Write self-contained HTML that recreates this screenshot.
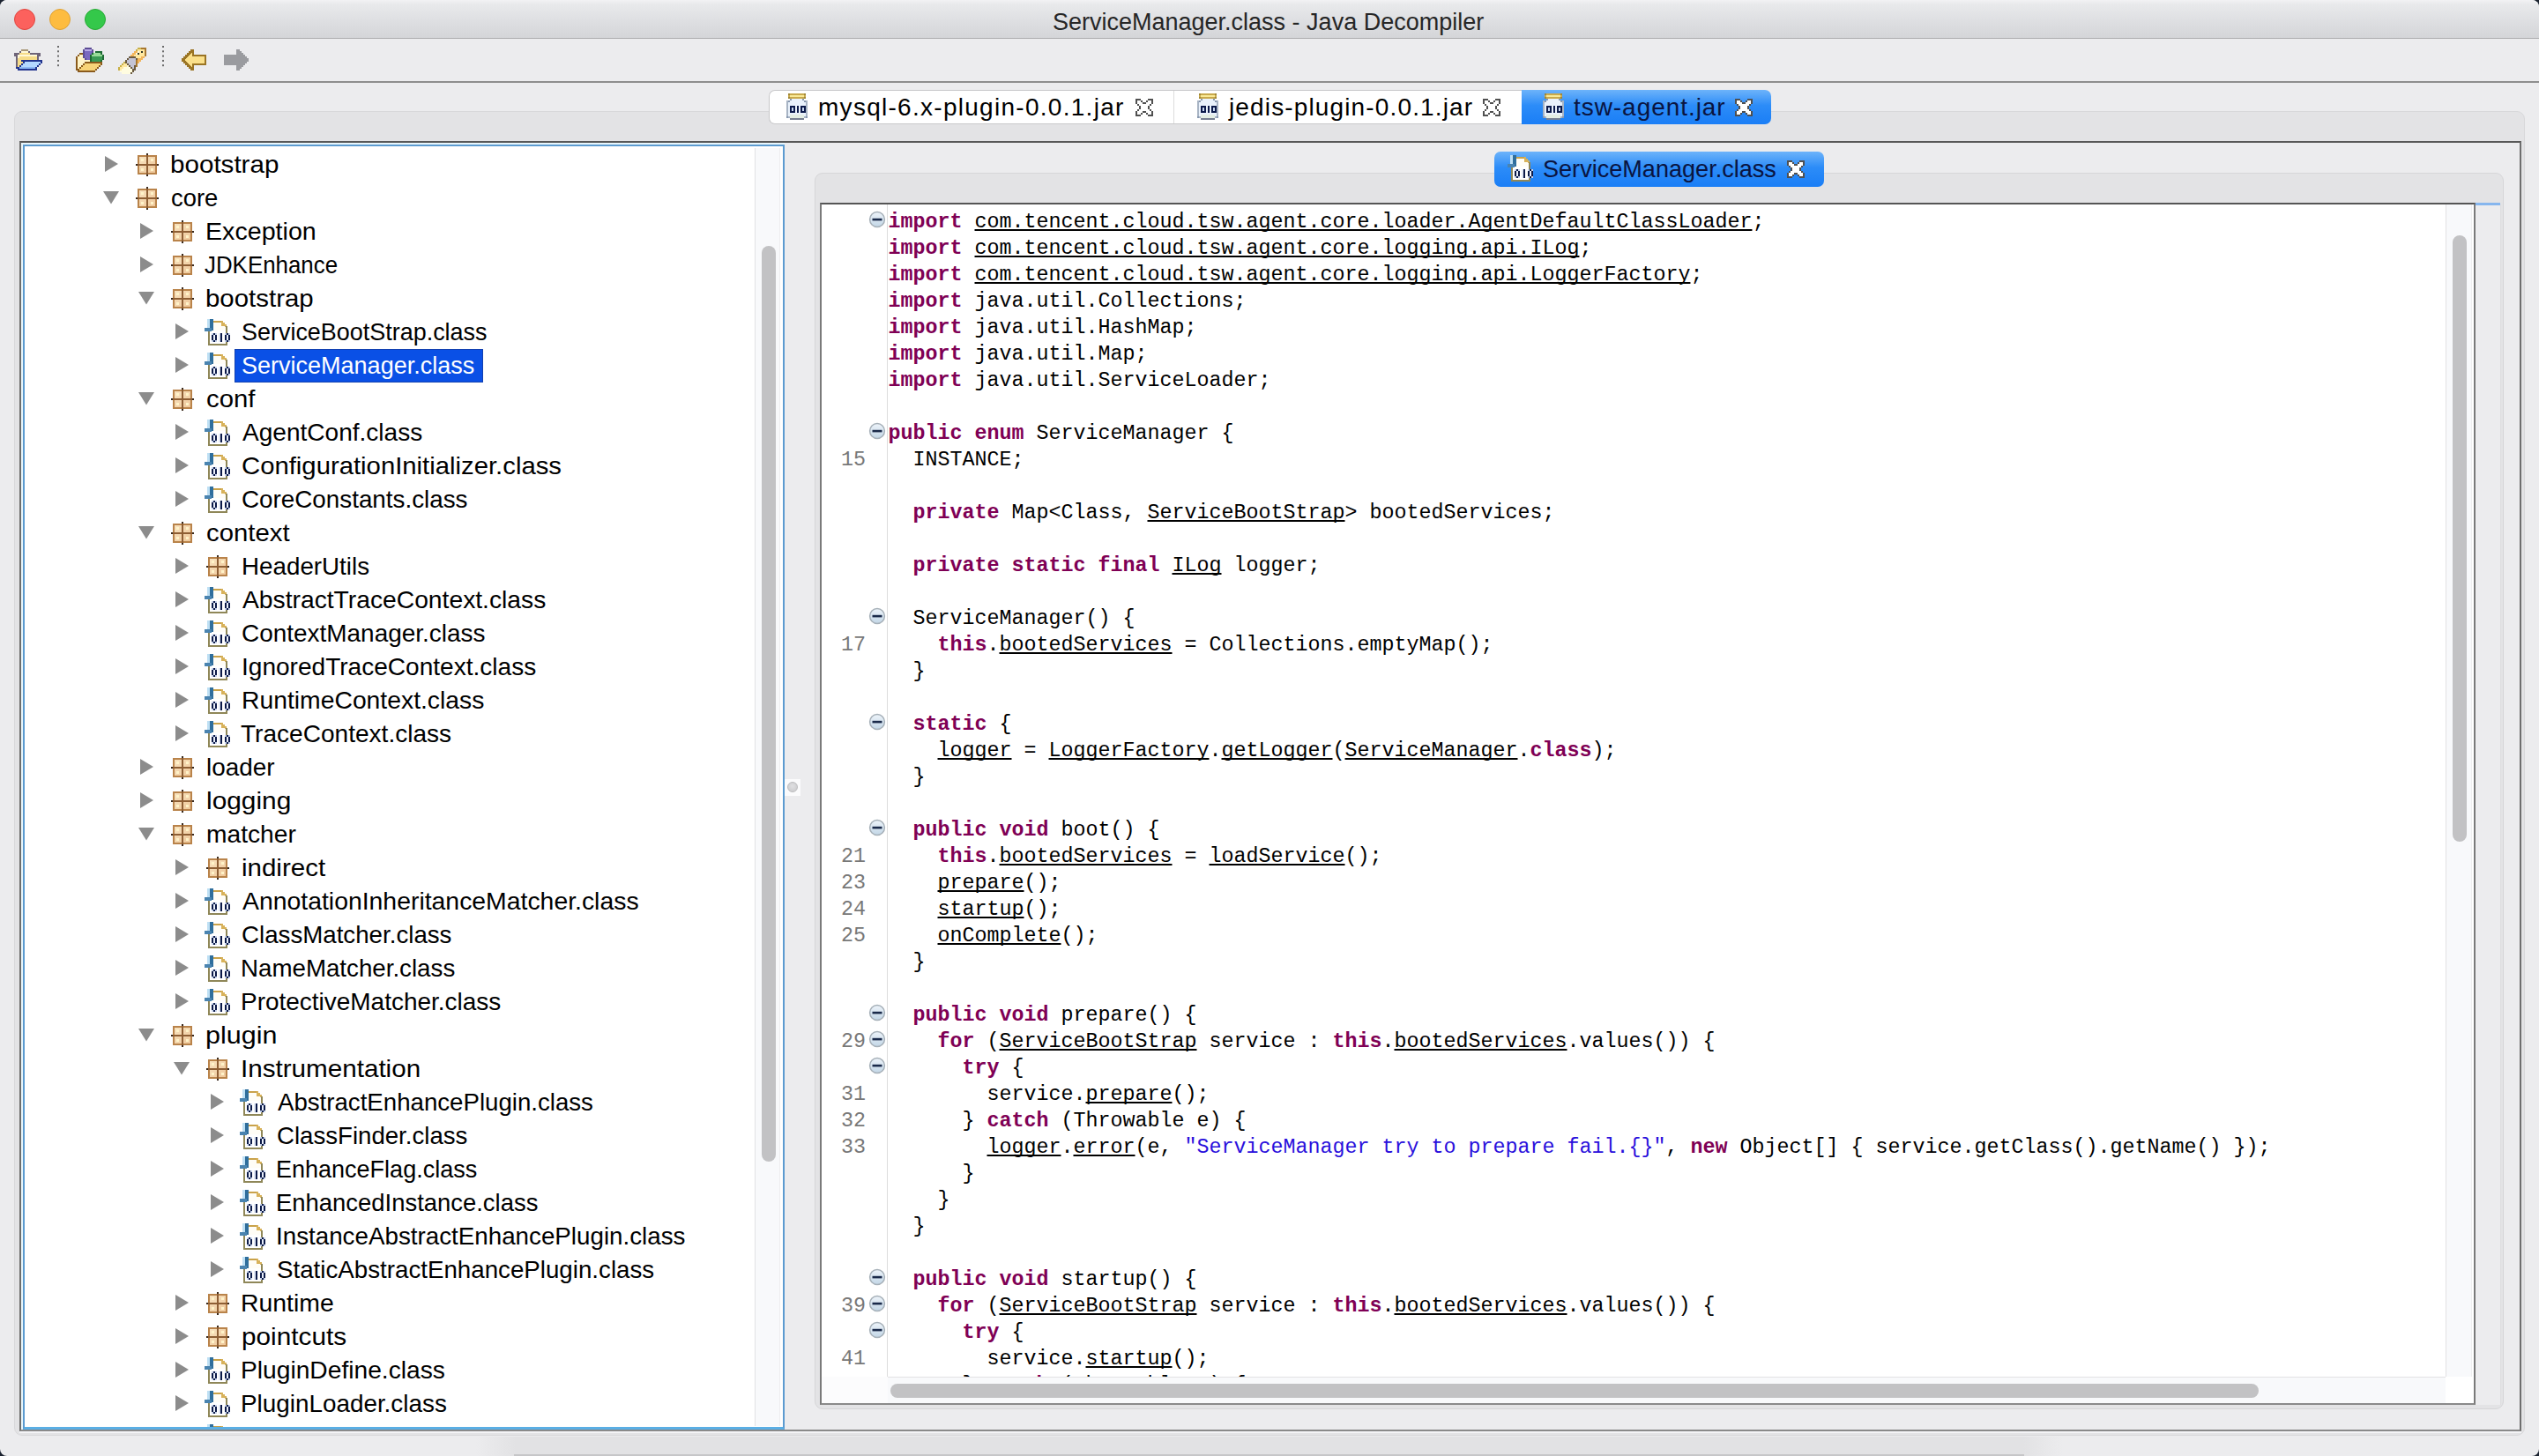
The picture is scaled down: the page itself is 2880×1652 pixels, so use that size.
<!DOCTYPE html>
<html><head><meta charset="utf-8"><style>
html,body{margin:0;padding:0;width:2880px;height:1652px;overflow:hidden;background:#1b2330}
.a{position:absolute;box-sizing:border-box}
#win{left:0;top:0;width:2880px;height:1652px;background:#ececee;border-radius:8px;overflow:hidden}
.ui{font-family:"Liberation Sans",sans-serif;white-space:pre}
.mono{font-family:"Liberation Mono",monospace;white-space:pre}
.code{font-size:23.333px;line-height:30px;color:#000}
.code b{color:#7f0055;font-weight:bold}
.code i{font-style:normal;color:#2a10dc}
.code u{text-decoration:underline;text-decoration-thickness:2px;text-underline-offset:2px;text-decoration-skip-ink:none}
.tl{font-size:28px;line-height:38px;color:#000}
svg{position:absolute;overflow:visible}
</style></head><body>
<div id="win" class="a">

<svg width="0" height="0" style="position:absolute"><defs>
<linearGradient id="gpk" x1="0" y1="0" x2="1" y2="1"><stop offset="0" stop-color="#f8e2bf"/><stop offset="1" stop-color="#eec79a"/></linearGradient>
<symbol id="pkg" viewBox="0 0 26 26" shape-rendering="crispEdges">
 <rect x="2" y="2" width="22" height="22" fill="#b9834a"/>
 <rect x="4" y="4" width="18" height="18" fill="url(#gpk)"/>
 <rect x="6" y="6" width="3" height="3" fill="#fff3c8"/><rect x="17" y="6" width="3" height="3" fill="#fff3c8"/>
 <rect x="6" y="17" width="3" height="3" fill="#fff3c8"/><rect x="17" y="17" width="3" height="3" fill="#fff3c8"/>
 <rect x="12" y="2" width="2" height="22" fill="#8e5e34"/>
 <rect x="2" y="12" width="22" height="2" fill="#8e5e34"/>
 <rect x="12" y="0" width="2" height="2" fill="#3a2a1c"/><rect x="12" y="24" width="2" height="2" fill="#3a2a1c"/>
 <rect x="0" y="12" width="2" height="2" fill="#3a2a1c"/><rect x="24" y="12" width="2" height="2" fill="#3a2a1c"/>
</symbol>
<symbol id="cls" viewBox="0 0 30 30" shape-rendering="crispEdges">
 <path d="M5 13 H24 V29 H5 Z" fill="#fff"/>
 <path d="M10 2 H19 L24 8 V13 H10 Z" fill="#fffdf6"/>
 <rect x="10" y="2" width="10" height="2" fill="#c9a24a"/>
 <path d="M19 2 h2 v2 h2 v2 h2 v3 h-2 v-1 h-4 z" fill="#d8b25a"/>
 <rect x="24" y="8" width="2" height="22" fill="#8f8758"/>
 <rect x="4" y="28" width="22" height="2" fill="#8f8758"/>
 <rect x="4" y="13" width="2" height="17" fill="#8f8758"/>
 <rect x="3" y="0" width="3" height="13" fill="#bfe0f4"/>
 <rect x="6" y="0" width="4" height="13" fill="#2f6e9c"/>
 <rect x="0" y="10" width="8" height="4" fill="#4a84b0"/>
 <rect x="8" y="16" width="6" height="10" fill="#c8d4ec"/><rect x="8" y="18" width="2" height="6" fill="#0c1a48"/><rect x="12" y="18" width="2" height="6" fill="#0c1a48"/><rect x="10" y="16" width="2" height="2" fill="#0c1a48"/><rect x="10" y="24" width="2" height="2" fill="#0c1a48"/><rect x="10" y="18" width="2" height="6" fill="#e8eefa"/>
 <rect x="18" y="16" width="2" height="10" fill="#0c1a48"/><rect x="16" y="16" width="2" height="10" fill="#dfe6f4"/>
 <rect x="23" y="16" width="6" height="10" fill="#c8d4ec"/><rect x="23" y="18" width="2" height="6" fill="#0c1a48"/><rect x="27" y="18" width="2" height="6" fill="#0c1a48"/><rect x="25" y="16" width="2" height="2" fill="#0c1a48"/><rect x="25" y="24" width="2" height="2" fill="#0c1a48"/><rect x="25" y="18" width="2" height="6" fill="#e8eefa"/>
</symbol>
<symbol id="cx" viewBox="0 0 20 20" shape-rendering="crispEdges"><rect x="0" y="0" width="6" height="2" fill="#505050"/><rect x="14" y="0" width="6" height="2" fill="#505050"/><rect x="0" y="2" width="2" height="2" fill="#505050"/><rect x="2" y="2" width="4" height="2" fill="#ffffff"/><rect x="6" y="2" width="2" height="2" fill="#505050"/><rect x="12" y="2" width="2" height="2" fill="#505050"/><rect x="14" y="2" width="4" height="2" fill="#ffffff"/><rect x="18" y="2" width="2" height="2" fill="#505050"/><rect x="0" y="4" width="2" height="2" fill="#505050"/><rect x="2" y="4" width="6" height="2" fill="#ffffff"/><rect x="8" y="4" width="4" height="2" fill="#505050"/><rect x="12" y="4" width="6" height="2" fill="#ffffff"/><rect x="18" y="4" width="2" height="2" fill="#505050"/><rect x="2" y="6" width="2" height="2" fill="#505050"/><rect x="4" y="6" width="12" height="2" fill="#ffffff"/><rect x="16" y="6" width="2" height="2" fill="#505050"/><rect x="4" y="8" width="2" height="2" fill="#505050"/><rect x="6" y="8" width="8" height="2" fill="#ffffff"/><rect x="14" y="8" width="2" height="2" fill="#505050"/><rect x="4" y="10" width="2" height="2" fill="#505050"/><rect x="6" y="10" width="8" height="2" fill="#ffffff"/><rect x="14" y="10" width="2" height="2" fill="#505050"/><rect x="2" y="12" width="2" height="2" fill="#505050"/><rect x="4" y="12" width="12" height="2" fill="#ffffff"/><rect x="16" y="12" width="2" height="2" fill="#505050"/><rect x="0" y="14" width="2" height="2" fill="#505050"/><rect x="2" y="14" width="6" height="2" fill="#ffffff"/><rect x="8" y="14" width="4" height="2" fill="#505050"/><rect x="12" y="14" width="6" height="2" fill="#ffffff"/><rect x="18" y="14" width="2" height="2" fill="#505050"/><rect x="0" y="16" width="2" height="2" fill="#505050"/><rect x="2" y="16" width="4" height="2" fill="#ffffff"/><rect x="6" y="16" width="2" height="2" fill="#505050"/><rect x="12" y="16" width="2" height="2" fill="#505050"/><rect x="14" y="16" width="4" height="2" fill="#ffffff"/><rect x="18" y="16" width="2" height="2" fill="#505050"/><rect x="0" y="18" width="6" height="2" fill="#505050"/><rect x="14" y="18" width="6" height="2" fill="#505050"/></symbol>
<symbol id="jar2" viewBox="0 0 24 30" shape-rendering="crispEdges"><rect x="2" y="0" width="2" height="2" fill="#a08838"/><rect x="4" y="0" width="16" height="2" fill="#c9a94c"/><rect x="20" y="0" width="2" height="2" fill="#a08838"/><rect x="2" y="2" width="2" height="2" fill="#c9a94c"/><rect x="4" y="2" width="16" height="2" fill="#f8e896"/><rect x="20" y="2" width="2" height="2" fill="#c9a94c"/><rect x="2" y="4" width="2" height="2" fill="#a08838"/><rect x="4" y="4" width="16" height="2" fill="#c9a94c"/><rect x="20" y="4" width="2" height="2" fill="#a08838"/><rect x="4" y="6" width="2" height="2" fill="#8898b0"/><rect x="6" y="6" width="12" height="2" fill="#eaf2fc"/><rect x="18" y="6" width="2" height="2" fill="#8898b0"/><rect x="0" y="8" width="2" height="2" fill="#a8b4c4"/><rect x="2" y="8" width="2" height="2" fill="#8898b0"/><rect x="4" y="8" width="16" height="2" fill="#eaf2fc"/><rect x="20" y="8" width="2" height="2" fill="#8898b0"/><rect x="22" y="8" width="2" height="2" fill="#a8b4c4"/><rect x="0" y="10" width="2" height="2" fill="#a8b4c4"/><rect x="2" y="10" width="20" height="2" fill="#eaf2fc"/><rect x="22" y="10" width="2" height="2" fill="#a8b4c4"/><rect x="0" y="12" width="2" height="2" fill="#a8b4c4"/><rect x="2" y="12" width="20" height="2" fill="#eaf2fc"/><rect x="22" y="12" width="2" height="2" fill="#a8b4c4"/><rect x="0" y="14" width="2" height="2" fill="#a8b4c4"/><rect x="2" y="14" width="2" height="2" fill="#eaf2fc"/><rect x="4" y="14" width="6" height="2" fill="#0c1a4a"/><rect x="10" y="14" width="2" height="2" fill="#eaf2fc"/><rect x="12" y="14" width="2" height="2" fill="#0c1a4a"/><rect x="14" y="14" width="2" height="2" fill="#eaf2fc"/><rect x="16" y="14" width="6" height="2" fill="#0c1a4a"/><rect x="22" y="14" width="2" height="2" fill="#a8b4c4"/><rect x="0" y="16" width="2" height="2" fill="#a8b4c4"/><rect x="2" y="16" width="2" height="2" fill="#eaf2fc"/><rect x="4" y="16" width="2" height="2" fill="#0c1a4a"/><rect x="6" y="16" width="2" height="2" fill="#c8d8f0"/><rect x="8" y="16" width="2" height="2" fill="#0c1a4a"/><rect x="10" y="16" width="2" height="2" fill="#eaf2fc"/><rect x="12" y="16" width="2" height="2" fill="#0c1a4a"/><rect x="14" y="16" width="2" height="2" fill="#eaf2fc"/><rect x="16" y="16" width="2" height="2" fill="#0c1a4a"/><rect x="18" y="16" width="2" height="2" fill="#c8d8f0"/><rect x="20" y="16" width="2" height="2" fill="#0c1a4a"/><rect x="22" y="16" width="2" height="2" fill="#a8b4c4"/><rect x="0" y="18" width="2" height="2" fill="#a8b4c4"/><rect x="2" y="18" width="2" height="2" fill="#eaf2fc"/><rect x="4" y="18" width="2" height="2" fill="#0c1a4a"/><rect x="6" y="18" width="2" height="2" fill="#c8d8f0"/><rect x="8" y="18" width="2" height="2" fill="#0c1a4a"/><rect x="10" y="18" width="2" height="2" fill="#eaf2fc"/><rect x="12" y="18" width="2" height="2" fill="#0c1a4a"/><rect x="14" y="18" width="2" height="2" fill="#eaf2fc"/><rect x="16" y="18" width="2" height="2" fill="#0c1a4a"/><rect x="18" y="18" width="2" height="2" fill="#c8d8f0"/><rect x="20" y="18" width="2" height="2" fill="#0c1a4a"/><rect x="22" y="18" width="2" height="2" fill="#a8b4c4"/><rect x="0" y="20" width="2" height="2" fill="#a8b4c4"/><rect x="2" y="20" width="2" height="2" fill="#eaf2fc"/><rect x="4" y="20" width="6" height="2" fill="#0c1a4a"/><rect x="10" y="20" width="2" height="2" fill="#eaf2fc"/><rect x="12" y="20" width="2" height="2" fill="#0c1a4a"/><rect x="14" y="20" width="2" height="2" fill="#eaf2fc"/><rect x="16" y="20" width="6" height="2" fill="#0c1a4a"/><rect x="22" y="20" width="2" height="2" fill="#a8b4c4"/><rect x="0" y="22" width="2" height="2" fill="#a8b4c4"/><rect x="2" y="22" width="20" height="2" fill="#eaf2fc"/><rect x="22" y="22" width="2" height="2" fill="#a8b4c4"/><rect x="0" y="24" width="2" height="2" fill="#a8b4c4"/><rect x="2" y="24" width="2" height="2" fill="#eaf2fc"/><rect x="4" y="24" width="16" height="2" fill="#e4eee4"/><rect x="20" y="24" width="2" height="2" fill="#eaf2fc"/><rect x="22" y="24" width="2" height="2" fill="#a8b4c4"/><rect x="0" y="26" width="2" height="2" fill="#8898b0"/><rect x="2" y="26" width="2" height="2" fill="#a8b4c4"/><rect x="4" y="26" width="16" height="2" fill="#e4eee4"/><rect x="20" y="26" width="2" height="2" fill="#a8b4c4"/><rect x="22" y="26" width="2" height="2" fill="#8898b0"/><rect x="4" y="28" width="16" height="2" fill="#788092"/></symbol>
<symbol id="jar" viewBox="0 0 26 32" shape-rendering="crispEdges">
 <rect x="2" y="1" width="20" height="6" fill="#b99a3a"/>
 <rect x="4" y="3" width="16" height="2" fill="#f6e28a"/>
 <rect x="3" y="8" width="18" height="24" fill="#9aa8b8"/>
 <rect x="0" y="10" width="24" height="20" fill="#aab4c2"/>
 <rect x="2" y="9" width="20" height="22" fill="#eef4fc"/>
 <rect x="4" y="14" width="6" height="8" fill="#0c1a48"/><rect x="6" y="16" width="2" height="4" fill="#eef4fc"/>
 <rect x="12" y="14" width="2" height="8" fill="#0c1a48"/>
 <rect x="16" y="14" width="6" height="8" fill="#0c1a48"/><rect x="18" y="16" width="2" height="4" fill="#eef4fc"/>
 <rect x="3" y="30" width="18" height="2" fill="#7a8496"/>
</symbol>
<linearGradient id="gfold" x1="0" y1="0" x2="0" y2="1"><stop offset="0" stop-color="#eef4fa"/><stop offset="1" stop-color="#c2d6e6"/></linearGradient>
<symbol id="fold" viewBox="0 0 20 20">
 <circle cx="10" cy="10" r="8.4" fill="url(#gfold)" stroke="#a6b0b8" stroke-width="1.5"/>
 <rect x="4.5" y="8.8" width="11" height="2.6" fill="#1a2a4a"/>
</symbol>
</defs></svg>

<div class="a" style="left:0;top:0;width:2880px;height:43px;background:linear-gradient(#f2f2f4,#e8e9eb 12%,#d4d5d8)"></div>
<div class="a" style="left:0;top:42.5px;width:2880px;height:1.5px;background:#acacae"></div>
<div class="a" style="left:15.8px;top:9.9px;width:24px;height:24px;border-radius:50%;background:#fc615d;border:1px solid #e0443e"></div>
<div class="a" style="left:55.7px;top:9.9px;width:24px;height:24px;border-radius:50%;background:#fdbc40;border:1px solid #dea236"></div>
<div class="a" style="left:95.8px;top:9.9px;width:24px;height:24px;border-radius:50%;background:#34c84a;border:1px solid #27aa35"></div>
<div class="a ui" style="left:1194px;top:6.5px;font-size:27px;line-height:36px;color:#262626">ServiceManager.class - Java Decompiler</div>
<div class="a" style="left:0;top:44px;width:2880px;height:48px;background:#ececee"></div>
<div class="a" style="left:0;top:92px;width:2880px;height:2px;background:#8e8e8e"></div>
<svg style="left:16px;top:56px" width="32" height="24" viewBox="0 0 32 24" shape-rendering="crispEdges"><rect x="8" y="0" width="8" height="2" fill="#a89878"/><rect x="6" y="2" width="2" height="2" fill="#6e6478"/><rect x="8" y="2" width="8" height="2" fill="#fff8d8"/><rect x="16" y="2" width="2" height="2" fill="#6e6478"/><rect x="0" y="4" width="6" height="2" fill="#6e6478"/><rect x="6" y="4" width="12" height="2" fill="#f6dc88"/><rect x="18" y="4" width="12" height="2" fill="#6e6478"/><rect x="0" y="6" width="4" height="2" fill="#6e6478"/><rect x="4" y="6" width="22" height="2" fill="#fff8d8"/><rect x="26" y="6" width="4" height="2" fill="#6e6478"/><rect x="2" y="8" width="2" height="2" fill="#6e6478"/><rect x="4" y="8" width="2" height="2" fill="#fff8d8"/><rect x="6" y="8" width="20" height="2" fill="#f6dc88"/><rect x="26" y="8" width="2" height="2" fill="#6e6478"/><rect x="2" y="10" width="2" height="2" fill="#6e6478"/><rect x="4" y="10" width="22" height="2" fill="#f6dc88"/><rect x="26" y="10" width="2" height="2" fill="#6e6478"/><rect x="2" y="12" width="2" height="2" fill="#6e6478"/><rect x="4" y="12" width="4" height="2" fill="#f6dc88"/><rect x="8" y="12" width="24" height="2" fill="#22348e"/><rect x="2" y="14" width="2" height="2" fill="#6e6478"/><rect x="4" y="14" width="6" height="2" fill="#f6dc88"/><rect x="10" y="14" width="2" height="2" fill="#22348e"/><rect x="12" y="14" width="18" height="2" fill="#b4d8ff"/><rect x="30" y="14" width="2" height="2" fill="#22348e"/><rect x="2" y="16" width="2" height="2" fill="#6e6478"/><rect x="4" y="16" width="4" height="2" fill="#f6dc88"/><rect x="8" y="16" width="2" height="2" fill="#22348e"/><rect x="10" y="16" width="18" height="2" fill="#b4d8ff"/><rect x="28" y="16" width="2" height="2" fill="#22348e"/><rect x="2" y="18" width="2" height="2" fill="#6e6478"/><rect x="4" y="18" width="2" height="2" fill="#f6dc88"/><rect x="6" y="18" width="2" height="2" fill="#22348e"/><rect x="8" y="18" width="18" height="2" fill="#b4d8ff"/><rect x="26" y="18" width="2" height="2" fill="#22348e"/><rect x="2" y="20" width="4" height="2" fill="#22348e"/><rect x="6" y="20" width="18" height="2" fill="#8cb8f4"/><rect x="24" y="20" width="2" height="2" fill="#22348e"/><rect x="4" y="22" width="22" height="2" fill="#22348e"/></svg>
<svg style="left:64px;top:50px" width="4" height="30" viewBox="0 0 4 30"><rect x="1" y="2.0" width="2" height="2" fill="#6a6a6a"/><rect x="1" y="7.3" width="2" height="2" fill="#6a6a6a"/><rect x="1" y="12.6" width="2" height="2" fill="#6a6a6a"/><rect x="1" y="17.9" width="2" height="2" fill="#6a6a6a"/><rect x="1" y="23.2" width="2" height="2" fill="#6a6a6a"/></svg>
<svg style="left:183px;top:50px" width="4" height="30" viewBox="0 0 4 30"><rect x="1" y="2.0" width="2" height="2" fill="#6a6a6a"/><rect x="1" y="7.3" width="2" height="2" fill="#6a6a6a"/><rect x="1" y="12.6" width="2" height="2" fill="#6a6a6a"/><rect x="1" y="17.9" width="2" height="2" fill="#6a6a6a"/><rect x="1" y="23.2" width="2" height="2" fill="#6a6a6a"/></svg>
<svg style="left:86px;top:54px" width="32" height="28" viewBox="0 0 32 28" shape-rendering="crispEdges"><rect x="10" y="0" width="8" height="2" fill="#5c4c94"/><rect x="8" y="2" width="2" height="2" fill="#5c4c94"/><rect x="10" y="2" width="8" height="2" fill="#b8a8e8"/><rect x="18" y="2" width="2" height="2" fill="#5c4c94"/><rect x="8" y="4" width="2" height="2" fill="#5c4c94"/><rect x="10" y="4" width="8" height="2" fill="#7a68c0"/><rect x="18" y="4" width="2" height="2" fill="#5c4c94"/><rect x="22" y="4" width="8" height="2" fill="#1e6a34"/><rect x="4" y="6" width="4" height="2" fill="#8a5a1c"/><rect x="8" y="6" width="2" height="2" fill="#5c4c94"/><rect x="10" y="6" width="8" height="2" fill="#7a68c0"/><rect x="18" y="6" width="2" height="2" fill="#1e6a34"/><rect x="20" y="6" width="8" height="2" fill="#98dc98"/><rect x="28" y="6" width="2" height="2" fill="#1e6a34"/><rect x="2" y="8" width="2" height="2" fill="#8a5a1c"/><rect x="4" y="8" width="4" height="2" fill="#fff4c8"/><rect x="8" y="8" width="2" height="2" fill="#5c4c94"/><rect x="10" y="8" width="6" height="2" fill="#7a68c0"/><rect x="16" y="8" width="2" height="2" fill="#1e6a34"/><rect x="18" y="8" width="12" height="2" fill="#98dc98"/><rect x="30" y="8" width="2" height="2" fill="#1e6a34"/><rect x="0" y="10" width="2" height="2" fill="#8a5a1c"/><rect x="2" y="10" width="6" height="2" fill="#fff4c8"/><rect x="8" y="10" width="2" height="2" fill="#5c4c94"/><rect x="10" y="10" width="6" height="2" fill="#7a68c0"/><rect x="16" y="10" width="2" height="2" fill="#1e6a34"/><rect x="18" y="10" width="12" height="2" fill="#3a9a54"/><rect x="30" y="10" width="2" height="2" fill="#1e6a34"/><rect x="0" y="12" width="2" height="2" fill="#8a5a1c"/><rect x="2" y="12" width="8" height="2" fill="#fff4c8"/><rect x="10" y="12" width="2" height="2" fill="#5c4c94"/><rect x="12" y="12" width="4" height="2" fill="#7a68c0"/><rect x="16" y="12" width="2" height="2" fill="#1e6a34"/><rect x="18" y="12" width="12" height="2" fill="#3a9a54"/><rect x="30" y="12" width="2" height="2" fill="#1e6a34"/><rect x="0" y="14" width="2" height="2" fill="#8a5a1c"/><rect x="2" y="14" width="14" height="2" fill="#fff4c8"/><rect x="16" y="14" width="2" height="2" fill="#1e6a34"/><rect x="18" y="14" width="10" height="2" fill="#3a9a54"/><rect x="28" y="14" width="2" height="2" fill="#1e6a34"/><rect x="0" y="16" width="2" height="2" fill="#8a5a1c"/><rect x="2" y="16" width="8" height="2" fill="#fff4c8"/><rect x="10" y="16" width="20" height="2" fill="#8a5a1c"/><rect x="0" y="18" width="2" height="2" fill="#8a5a1c"/><rect x="2" y="18" width="6" height="2" fill="#fff4c8"/><rect x="8" y="18" width="2" height="2" fill="#8a5a1c"/><rect x="10" y="18" width="18" height="2" fill="#f8d478"/><rect x="28" y="18" width="2" height="2" fill="#8a5a1c"/><rect x="0" y="20" width="2" height="2" fill="#8a5a1c"/><rect x="2" y="20" width="4" height="2" fill="#fff4c8"/><rect x="6" y="20" width="2" height="2" fill="#8a5a1c"/><rect x="8" y="20" width="18" height="2" fill="#f8d478"/><rect x="26" y="20" width="2" height="2" fill="#8a5a1c"/><rect x="0" y="22" width="2" height="2" fill="#8a5a1c"/><rect x="2" y="22" width="2" height="2" fill="#fff4c8"/><rect x="4" y="22" width="2" height="2" fill="#8a5a1c"/><rect x="6" y="22" width="18" height="2" fill="#f8d478"/><rect x="24" y="22" width="2" height="2" fill="#8a5a1c"/><rect x="0" y="24" width="4" height="2" fill="#8a5a1c"/><rect x="4" y="24" width="18" height="2" fill="#f8d478"/><rect x="22" y="24" width="2" height="2" fill="#8a5a1c"/><rect x="2" y="26" width="20" height="2" fill="#8a5a1c"/></svg>
<svg style="left:134px;top:54px" width="32" height="30" viewBox="0 0 32 30" shape-rendering="crispEdges"><rect x="22" y="0" width="4" height="2" fill="#c8b048"/><rect x="26" y="0" width="6" height="2" fill="#a87830"/><rect x="20" y="2" width="2" height="2" fill="#c8b048"/><rect x="22" y="2" width="8" height="2" fill="#ffe8a0"/><rect x="30" y="2" width="2" height="2" fill="#a87830"/><rect x="18" y="4" width="4" height="2" fill="#f2b45a"/><rect x="22" y="4" width="2" height="2" fill="#fffce0"/><rect x="24" y="4" width="2" height="2" fill="#ffe8a0"/><rect x="26" y="4" width="2" height="2" fill="#303828"/><rect x="28" y="4" width="2" height="2" fill="#ffe8a0"/><rect x="30" y="4" width="2" height="2" fill="#a87830"/><rect x="16" y="6" width="4" height="2" fill="#f2b45a"/><rect x="20" y="6" width="2" height="2" fill="#fffce0"/><rect x="22" y="6" width="2" height="2" fill="#303828"/><rect x="24" y="6" width="6" height="2" fill="#ffe8a0"/><rect x="30" y="6" width="2" height="2" fill="#a87830"/><rect x="14" y="8" width="4" height="2" fill="#f2b45a"/><rect x="18" y="8" width="12" height="2" fill="#ffe8a0"/><rect x="30" y="8" width="2" height="2" fill="#a87830"/><rect x="12" y="10" width="8" height="2" fill="#6a5a40"/><rect x="20" y="10" width="6" height="2" fill="#ffe8a0"/><rect x="26" y="10" width="4" height="2" fill="#f2b45a"/><rect x="10" y="12" width="2" height="2" fill="#6a5a40"/><rect x="12" y="12" width="8" height="2" fill="#c4c4d4"/><rect x="20" y="12" width="2" height="2" fill="#6a5a40"/><rect x="22" y="12" width="6" height="2" fill="#f2b45a"/><rect x="8" y="14" width="2" height="2" fill="#6a5a40"/><rect x="10" y="14" width="10" height="2" fill="#c4c4d4"/><rect x="20" y="14" width="2" height="2" fill="#a87830"/><rect x="22" y="14" width="4" height="2" fill="#f2b45a"/><rect x="6" y="16" width="2" height="2" fill="#c8b048"/><rect x="8" y="16" width="2" height="2" fill="#6a5a40"/><rect x="10" y="16" width="10" height="2" fill="#c4c4d4"/><rect x="20" y="16" width="2" height="2" fill="#a87830"/><rect x="22" y="16" width="2" height="2" fill="#f2b45a"/><rect x="4" y="18" width="2" height="2" fill="#c8b048"/><rect x="6" y="18" width="4" height="2" fill="#ffe8a0"/><rect x="10" y="18" width="2" height="2" fill="#6a5a40"/><rect x="12" y="18" width="8" height="2" fill="#c4c4d4"/><rect x="20" y="18" width="2" height="2" fill="#a87830"/><rect x="2" y="20" width="2" height="2" fill="#c8b048"/><rect x="4" y="20" width="6" height="2" fill="#ffe8a0"/><rect x="10" y="20" width="2" height="2" fill="#fffce0"/><rect x="12" y="20" width="2" height="2" fill="#6a5a40"/><rect x="14" y="20" width="4" height="2" fill="#c4c4d4"/><rect x="18" y="20" width="2" height="2" fill="#6a5a40"/><rect x="20" y="20" width="2" height="2" fill="#a87830"/><rect x="0" y="22" width="2" height="2" fill="#c8b048"/><rect x="2" y="22" width="4" height="2" fill="#ffe8a0"/><rect x="6" y="22" width="8" height="2" fill="#fffce0"/><rect x="14" y="22" width="2" height="2" fill="#6a5a40"/><rect x="16" y="22" width="2" height="2" fill="#c4c4d4"/><rect x="18" y="22" width="2" height="2" fill="#6a5a40"/><rect x="0" y="24" width="2" height="2" fill="#c8b048"/><rect x="2" y="24" width="2" height="2" fill="#ffe8a0"/><rect x="4" y="24" width="12" height="2" fill="#fffce0"/><rect x="16" y="24" width="4" height="2" fill="#6a5a40"/><rect x="2" y="26" width="14" height="2" fill="#fffce0"/><rect x="16" y="26" width="2" height="2" fill="#6a5a40"/><rect x="4" y="28" width="10" height="2" fill="#fffce0"/><rect x="14" y="28" width="2" height="2" fill="#6a5a40"/></svg>
<svg style="left:206px;top:56px" width="28" height="24" viewBox="0 0 28 24" shape-rendering="crispEdges">
 <path d="M0 10 h2 v-2 h2 v-2 h2 v-2 h2 v-2 h2 v-2 h4 v6 h14 v12 h-14 v6 h-4 v-2 h-2 v-2 h-2 v-2 h-2 v-2 h-2 v-2 h-2 z" fill="#9a7424"/>
 <path d="M3 12 L12 3 V8 H26 V16 H12 V21 Z" fill="#fbe08a"/>
</svg>
<svg style="left:254px;top:56px" width="28" height="24" viewBox="0 0 28 24" shape-rendering="crispEdges">
 <path d="M28 10 h-2 v-2 h-2 v-2 h-2 v-2 h-2 v-2 h-2 v-2 h-4 v6 h-14 v12 h14 v6 h4 v-2 h2 v-2 h2 v-2 h2 v-2 h2 v-2 h2 z" fill="#9a9b9f"/>
</svg>
<div class="a" style="left:16px;top:126px;width:2848px;height:1503px;background:#e3e3e5;border:1px solid #d8d8da;border-radius:9px"></div>
<div class="a" style="left:872px;top:102px;width:854px;height:39px;background:#fff;border:1px solid #c8c8ca;border-right:none;border-radius:7px 0 0 7px"></div>
<div class="a" style="left:1331px;top:103px;width:1px;height:37px;background:#dcdcdc"></div>
<div class="a" style="left:1726px;top:102px;width:283px;height:39px;background:linear-gradient(#6db3fa,#2c8cf8 45%,#1a7ef6);border-radius:0 7px 7px 0"></div>
<svg style="left:892px;top:106px" width="24" height="30" viewBox="0 0 24 30"><use href="#jar2"/></svg>
<svg style="left:1358px;top:106px" width="24" height="30" viewBox="0 0 24 30"><use href="#jar2"/></svg>
<svg style="left:1750px;top:106px" width="24" height="30" viewBox="0 0 24 30"><use href="#jar2"/></svg>
<div class="a ui" style="left:928px;top:103px;font-size:28px;line-height:38px;letter-spacing:1.28px;color:#000">mysql-6.x-plugin-0.0.1.jar</div>
<div class="a ui" style="left:1394px;top:103px;font-size:28px;line-height:38px;letter-spacing:1.14px;color:#000">jedis-plugin-0.0.1.jar</div>
<div class="a ui" style="left:1785px;top:103px;font-size:28px;line-height:38px;letter-spacing:0.95px;color:#0a1440">tsw-agent.jar</div>
<svg style="left:1288px;top:112px" width="20" height="20" viewBox="0 0 20 20"><use href="#cx"/></svg>
<svg style="left:1682px;top:112px" width="20" height="20" viewBox="0 0 20 20"><use href="#cx"/></svg>
<svg style="left:1968px;top:112px" width="20" height="20" viewBox="0 0 20 20"><use href="#cx"/></svg>
<div class="a" style="left:22px;top:160px;width:2838px;height:1464px;background:#ececee;border:2px solid #6e6e6e;border-top-color:#585858;border-bottom-color:#8a8a8a"></div>
<div class="a" style="left:22px;top:1624px;width:2838px;height:2px;background:#f4f4f6"></div>
<div class="a" style="left:540px;top:1630px;width:1800px;height:22px;background:linear-gradient(90deg,rgba(226,226,228,0),#e2e2e4 45px,#e2e2e4 1755px,rgba(226,226,228,0))"></div>
<div class="a" style="left:583px;top:1650px;width:1713px;height:2px;background:#c6c6c8"></div>
<div class="a" style="left:24px;top:162px;width:866px;height:1460px;background:#e8f6fc"></div>
<div class="a" style="left:26px;top:164px;width:864px;height:1458px;border:2px solid #5c9bd0;border-bottom:3.5px solid #5aaee4;background:#fff"></div>
<div class="a" style="left:27px;top:166px;width:861px;height:1453px;overflow:hidden">
<svg style="left:92px;top:11px" width="16" height="18" viewBox="0 0 16 18"><path d="M0 0 L15 9 L0 18Z" fill="#8c8c8c"/></svg>
<svg style="left:127px;top:8px" width="26" height="26" viewBox="0 0 26 26"><use href="#pkg"/></svg>
<div class="a ui tl" style="left:166.29px;top:2px;color:#000;transform:scaleX(1.0570);transform-origin:0 0">bootstrap</div>
<svg style="left:90px;top:51px" width="18" height="15" viewBox="0 0 18 15"><path d="M0 0 H18 L9 14.5Z" fill="#8c8c8c"/></svg>
<svg style="left:127px;top:46px" width="26" height="26" viewBox="0 0 26 26"><use href="#pkg"/></svg>
<div class="a ui tl" style="left:167.42px;top:40px;color:#000;transform:scaleX(0.9792);transform-origin:0 0">core</div>
<svg style="left:132px;top:87px" width="16" height="18" viewBox="0 0 16 18"><path d="M0 0 L15 9 L0 18Z" fill="#8c8c8c"/></svg>
<svg style="left:167px;top:84px" width="26" height="26" viewBox="0 0 26 26"><use href="#pkg"/></svg>
<div class="a ui tl" style="left:206.05px;top:78px;color:#000;transform:scaleX(1.0227);transform-origin:0 0">Exception</div>
<svg style="left:132px;top:125px" width="16" height="18" viewBox="0 0 16 18"><path d="M0 0 L15 9 L0 18Z" fill="#8c8c8c"/></svg>
<svg style="left:167px;top:122px" width="26" height="26" viewBox="0 0 26 26"><use href="#pkg"/></svg>
<div class="a ui tl" style="left:204.60px;top:116px;color:#000;transform:scaleX(0.9241);transform-origin:0 0">JDKEnhance</div>
<svg style="left:130px;top:165px" width="18" height="15" viewBox="0 0 18 15"><path d="M0 0 H18 L9 14.5Z" fill="#8c8c8c"/></svg>
<svg style="left:167px;top:160px" width="26" height="26" viewBox="0 0 26 26"><use href="#pkg"/></svg>
<div class="a ui tl" style="left:206.40px;top:154px;color:#000;transform:scaleX(1.0509);transform-origin:0 0">bootstrap</div>
<svg style="left:172px;top:201px" width="16" height="18" viewBox="0 0 16 18"><path d="M0 0 L15 9 L0 18Z" fill="#8c8c8c"/></svg>
<svg style="left:205px;top:196px" width="30" height="30" viewBox="0 0 30 30"><use href="#cls"/></svg>
<div class="a ui tl" style="left:246.74px;top:192px;color:#000;transform:scaleX(0.9622);transform-origin:0 0">ServiceBootStrap.class</div>
<svg style="left:172px;top:239px" width="16" height="18" viewBox="0 0 16 18"><path d="M0 0 L15 9 L0 18Z" fill="#8c8c8c"/></svg>
<svg style="left:205px;top:234px" width="30" height="30" viewBox="0 0 30 30"><use href="#cls"/></svg>
<div class="a" style="left:239px;top:230px;width:282px;height:38px;background:#0a50e6;box-shadow:inset 0 0 0 1px #1240b0"></div>
<div class="a ui tl" style="left:246.84px;top:230px;color:#fff;transform:scaleX(0.9647);transform-origin:0 0">ServiceManager.class</div>
<svg style="left:130px;top:279px" width="18" height="15" viewBox="0 0 18 15"><path d="M0 0 H18 L9 14.5Z" fill="#8c8c8c"/></svg>
<svg style="left:167px;top:274px" width="26" height="26" viewBox="0 0 26 26"><use href="#pkg"/></svg>
<div class="a ui tl" style="left:207.35px;top:268px;color:#000;transform:scaleX(1.0481);transform-origin:0 0">conf</div>
<svg style="left:172px;top:315px" width="16" height="18" viewBox="0 0 16 18"><path d="M0 0 L15 9 L0 18Z" fill="#8c8c8c"/></svg>
<svg style="left:205px;top:310px" width="30" height="30" viewBox="0 0 30 30"><use href="#cls"/></svg>
<div class="a ui tl" style="left:247.70px;top:306px;color:#000;transform:scaleX(1.0015);transform-origin:0 0">AgentConf.class</div>
<svg style="left:172px;top:353px" width="16" height="18" viewBox="0 0 16 18"><path d="M0 0 L15 9 L0 18Z" fill="#8c8c8c"/></svg>
<svg style="left:205px;top:348px" width="30" height="30" viewBox="0 0 30 30"><use href="#cls"/></svg>
<div class="a ui tl" style="left:246.65px;top:344px;color:#000;transform:scaleX(1.0458);transform-origin:0 0">ConfigurationInitializer.class</div>
<svg style="left:172px;top:391px" width="16" height="18" viewBox="0 0 16 18"><path d="M0 0 L15 9 L0 18Z" fill="#8c8c8c"/></svg>
<svg style="left:205px;top:386px" width="30" height="30" viewBox="0 0 30 30"><use href="#cls"/></svg>
<div class="a ui tl" style="left:247.21px;top:382px;color:#000;transform:scaleX(0.9930);transform-origin:0 0">CoreConstants.class</div>
<svg style="left:130px;top:431px" width="18" height="15" viewBox="0 0 18 15"><path d="M0 0 H18 L9 14.5Z" fill="#8c8c8c"/></svg>
<svg style="left:167px;top:426px" width="26" height="26" viewBox="0 0 26 26"><use href="#pkg"/></svg>
<div class="a ui tl" style="left:207.45px;top:420px;color:#000;transform:scaleX(1.0483);transform-origin:0 0">context</div>
<svg style="left:172px;top:467px" width="16" height="18" viewBox="0 0 16 18"><path d="M0 0 L15 9 L0 18Z" fill="#8c8c8c"/></svg>
<svg style="left:207px;top:464px" width="26" height="26" viewBox="0 0 26 26"><use href="#pkg"/></svg>
<div class="a ui tl" style="left:246.62px;top:458px;color:#000;transform:scaleX(0.9916);transform-origin:0 0">HeaderUtils</div>
<svg style="left:172px;top:505px" width="16" height="18" viewBox="0 0 16 18"><path d="M0 0 L15 9 L0 18Z" fill="#8c8c8c"/></svg>
<svg style="left:205px;top:500px" width="30" height="30" viewBox="0 0 30 30"><use href="#cls"/></svg>
<div class="a ui tl" style="left:247.60px;top:496px;color:#000;transform:scaleX(1.0088);transform-origin:0 0">AbstractTraceContext.class</div>
<svg style="left:172px;top:543px" width="16" height="18" viewBox="0 0 16 18"><path d="M0 0 L15 9 L0 18Z" fill="#8c8c8c"/></svg>
<svg style="left:205px;top:538px" width="30" height="30" viewBox="0 0 30 30"><use href="#cls"/></svg>
<div class="a ui tl" style="left:247.20px;top:534px;color:#000;transform:scaleX(0.9978);transform-origin:0 0">ContextManager.class</div>
<svg style="left:172px;top:581px" width="16" height="18" viewBox="0 0 16 18"><path d="M0 0 L15 9 L0 18Z" fill="#8c8c8c"/></svg>
<svg style="left:205px;top:576px" width="30" height="30" viewBox="0 0 30 30"><use href="#cls"/></svg>
<div class="a ui tl" style="left:246.60px;top:572px;color:#000;transform:scaleX(1.0021);transform-origin:0 0">IgnoredTraceContext.class</div>
<svg style="left:172px;top:619px" width="16" height="18" viewBox="0 0 16 18"><path d="M0 0 L15 9 L0 18Z" fill="#8c8c8c"/></svg>
<svg style="left:205px;top:614px" width="30" height="30" viewBox="0 0 30 30"><use href="#cls"/></svg>
<div class="a ui tl" style="left:246.58px;top:610px;color:#000;transform:scaleX(1.0112);transform-origin:0 0">RuntimeContext.class</div>
<svg style="left:172px;top:657px" width="16" height="18" viewBox="0 0 16 18"><path d="M0 0 L15 9 L0 18Z" fill="#8c8c8c"/></svg>
<svg style="left:205px;top:652px" width="30" height="30" viewBox="0 0 30 30"><use href="#cls"/></svg>
<div class="a ui tl" style="left:246.00px;top:648px;color:#000;transform:scaleX(1.0021);transform-origin:0 0">TraceContext.class</div>
<svg style="left:132px;top:695px" width="16" height="18" viewBox="0 0 16 18"><path d="M0 0 L15 9 L0 18Z" fill="#8c8c8c"/></svg>
<svg style="left:167px;top:692px" width="26" height="26" viewBox="0 0 26 26"><use href="#pkg"/></svg>
<div class="a ui tl" style="left:207.11px;top:686px;color:#000;transform:scaleX(0.9947);transform-origin:0 0">loader</div>
<svg style="left:132px;top:733px" width="16" height="18" viewBox="0 0 16 18"><path d="M0 0 L15 9 L0 18Z" fill="#8c8c8c"/></svg>
<svg style="left:167px;top:730px" width="26" height="26" viewBox="0 0 26 26"><use href="#pkg"/></svg>
<div class="a ui tl" style="left:206.97px;top:724px;color:#000;transform:scaleX(1.0655);transform-origin:0 0">logging</div>
<svg style="left:130px;top:773px" width="18" height="15" viewBox="0 0 18 15"><path d="M0 0 H18 L9 14.5Z" fill="#8c8c8c"/></svg>
<svg style="left:167px;top:768px" width="26" height="26" viewBox="0 0 26 26"><use href="#pkg"/></svg>
<div class="a ui tl" style="left:207.09px;top:762px;color:#000;transform:scaleX(1.0071);transform-origin:0 0">matcher</div>
<svg style="left:172px;top:809px" width="16" height="18" viewBox="0 0 16 18"><path d="M0 0 L15 9 L0 18Z" fill="#8c8c8c"/></svg>
<svg style="left:207px;top:806px" width="26" height="26" viewBox="0 0 26 26"><use href="#pkg"/></svg>
<div class="a ui tl" style="left:246.89px;top:800px;color:#000;transform:scaleX(1.0534);transform-origin:0 0">indirect</div>
<svg style="left:172px;top:847px" width="16" height="18" viewBox="0 0 16 18"><path d="M0 0 L15 9 L0 18Z" fill="#8c8c8c"/></svg>
<svg style="left:205px;top:842px" width="30" height="30" viewBox="0 0 30 30"><use href="#cls"/></svg>
<div class="a ui tl" style="left:247.80px;top:838px;color:#000;transform:scaleX(1.0135);transform-origin:0 0">AnnotationInheritanceMatcher.class</div>
<svg style="left:172px;top:885px" width="16" height="18" viewBox="0 0 16 18"><path d="M0 0 L15 9 L0 18Z" fill="#8c8c8c"/></svg>
<svg style="left:205px;top:880px" width="30" height="30" viewBox="0 0 30 30"><use href="#cls"/></svg>
<div class="a ui tl" style="left:247.21px;top:876px;color:#000;transform:scaleX(0.9887);transform-origin:0 0">ClassMatcher.class</div>
<svg style="left:172px;top:923px" width="16" height="18" viewBox="0 0 16 18"><path d="M0 0 L15 9 L0 18Z" fill="#8c8c8c"/></svg>
<svg style="left:205px;top:918px" width="30" height="30" viewBox="0 0 30 30"><use href="#cls"/></svg>
<div class="a ui tl" style="left:246.22px;top:914px;color:#000;transform:scaleX(0.9893);transform-origin:0 0">NameMatcher.class</div>
<svg style="left:172px;top:961px" width="16" height="18" viewBox="0 0 16 18"><path d="M0 0 L15 9 L0 18Z" fill="#8c8c8c"/></svg>
<svg style="left:205px;top:956px" width="30" height="30" viewBox="0 0 30 30"><use href="#cls"/></svg>
<div class="a ui tl" style="left:246.20px;top:952px;color:#000;transform:scaleX(0.9986);transform-origin:0 0">ProtectiveMatcher.class</div>
<svg style="left:130px;top:1001px" width="18" height="15" viewBox="0 0 18 15"><path d="M0 0 H18 L9 14.5Z" fill="#8c8c8c"/></svg>
<svg style="left:167px;top:996px" width="26" height="26" viewBox="0 0 26 26"><use href="#pkg"/></svg>
<div class="a ui tl" style="left:206.22px;top:990px;color:#000;transform:scaleX(1.0887);transform-origin:0 0">plugin</div>
<svg style="left:170px;top:1039px" width="18" height="15" viewBox="0 0 18 15"><path d="M0 0 H18 L9 14.5Z" fill="#8c8c8c"/></svg>
<svg style="left:207px;top:1034px" width="26" height="26" viewBox="0 0 26 26"><use href="#pkg"/></svg>
<div class="a ui tl" style="left:245.68px;top:1028px;color:#000;transform:scaleX(1.0577);transform-origin:0 0">Instrumentation</div>
<svg style="left:212px;top:1075px" width="16" height="18" viewBox="0 0 16 18"><path d="M0 0 L15 9 L0 18Z" fill="#8c8c8c"/></svg>
<svg style="left:245px;top:1070px" width="30" height="30" viewBox="0 0 30 30"><use href="#cls"/></svg>
<div class="a ui tl" style="left:287.50px;top:1066px;color:#000;transform:scaleX(0.9870);transform-origin:0 0">AbstractEnhancePlugin.class</div>
<svg style="left:212px;top:1113px" width="16" height="18" viewBox="0 0 16 18"><path d="M0 0 L15 9 L0 18Z" fill="#8c8c8c"/></svg>
<svg style="left:245px;top:1108px" width="30" height="30" viewBox="0 0 30 30"><use href="#cls"/></svg>
<div class="a ui tl" style="left:286.51px;top:1104px;color:#000;transform:scaleX(0.9862);transform-origin:0 0">ClassFinder.class</div>
<svg style="left:212px;top:1151px" width="16" height="18" viewBox="0 0 16 18"><path d="M0 0 L15 9 L0 18Z" fill="#8c8c8c"/></svg>
<svg style="left:245px;top:1146px" width="30" height="30" viewBox="0 0 30 30"><use href="#cls"/></svg>
<div class="a ui tl" style="left:285.57px;top:1142px;color:#000;transform:scaleX(0.9645);transform-origin:0 0">EnhanceFlag.class</div>
<svg style="left:212px;top:1189px" width="16" height="18" viewBox="0 0 16 18"><path d="M0 0 L15 9 L0 18Z" fill="#8c8c8c"/></svg>
<svg style="left:245px;top:1184px" width="30" height="30" viewBox="0 0 30 30"><use href="#cls"/></svg>
<div class="a ui tl" style="left:285.54px;top:1180px;color:#000;transform:scaleX(0.9797);transform-origin:0 0">EnhancedInstance.class</div>
<svg style="left:212px;top:1227px" width="16" height="18" viewBox="0 0 16 18"><path d="M0 0 L15 9 L0 18Z" fill="#8c8c8c"/></svg>
<svg style="left:245px;top:1222px" width="30" height="30" viewBox="0 0 30 30"><use href="#cls"/></svg>
<div class="a ui tl" style="left:286.42px;top:1218px;color:#000;transform:scaleX(0.9914);transform-origin:0 0">InstanceAbstractEnhancePlugin.class</div>
<svg style="left:212px;top:1265px" width="16" height="18" viewBox="0 0 16 18"><path d="M0 0 L15 9 L0 18Z" fill="#8c8c8c"/></svg>
<svg style="left:245px;top:1260px" width="30" height="30" viewBox="0 0 30 30"><use href="#cls"/></svg>
<div class="a ui tl" style="left:286.51px;top:1256px;color:#000;transform:scaleX(0.9896);transform-origin:0 0">StaticAbstractEnhancePlugin.class</div>
<svg style="left:172px;top:1303px" width="16" height="18" viewBox="0 0 16 18"><path d="M0 0 L15 9 L0 18Z" fill="#8c8c8c"/></svg>
<svg style="left:207px;top:1300px" width="26" height="26" viewBox="0 0 26 26"><use href="#pkg"/></svg>
<div class="a ui tl" style="left:246.07px;top:1294px;color:#000;transform:scaleX(1.0139);transform-origin:0 0">Runtime</div>
<svg style="left:172px;top:1341px" width="16" height="18" viewBox="0 0 16 18"><path d="M0 0 L15 9 L0 18Z" fill="#8c8c8c"/></svg>
<svg style="left:207px;top:1338px" width="26" height="26" viewBox="0 0 26 26"><use href="#pkg"/></svg>
<div class="a ui tl" style="left:246.78px;top:1332px;color:#000;transform:scaleX(1.0624);transform-origin:0 0">pointcuts</div>
<svg style="left:172px;top:1379px" width="16" height="18" viewBox="0 0 16 18"><path d="M0 0 L15 9 L0 18Z" fill="#8c8c8c"/></svg>
<svg style="left:205px;top:1374px" width="30" height="30" viewBox="0 0 30 30"><use href="#cls"/></svg>
<div class="a ui tl" style="left:246.09px;top:1370px;color:#000;transform:scaleX(1.0066);transform-origin:0 0">PluginDefine.class</div>
<svg style="left:172px;top:1417px" width="16" height="18" viewBox="0 0 16 18"><path d="M0 0 L15 9 L0 18Z" fill="#8c8c8c"/></svg>
<svg style="left:205px;top:1412px" width="30" height="30" viewBox="0 0 30 30"><use href="#cls"/></svg>
<div class="a ui tl" style="left:246.11px;top:1408px;color:#000;transform:scaleX(0.9948);transform-origin:0 0">PluginLoader.class</div>
<svg style="left:172px;top:1455px" width="16" height="18" viewBox="0 0 16 18"><path d="M0 0 L15 9 L0 18Z" fill="#8c8c8c"/></svg>
<svg style="left:205px;top:1450px" width="30" height="30" viewBox="0 0 30 30"><use href="#cls"/></svg>
<div class="a ui tl" style="left:246.25px;top:1446px;color:#000;transform:scaleX(0.9269);transform-origin:0 0">PluginLoader2.class</div>
</div>
<div class="a" style="left:856px;top:168px;width:29px;height:1450px;background:#f8f9fb;border-left:1px solid #e2e2e4;border-right:1px solid #eeeeef"></div>
<div class="a" style="left:864px;top:279px;width:16px;height:1039px;border-radius:8px;background:#c2c2c4"></div>
<div class="a" style="left:890px;top:884px;width:18px;height:19px;background:#fbfbfc"></div>
<div class="a" style="left:893px;top:887px;width:12px;height:12px;border-radius:50%;background:radial-gradient(circle at 50% 40%,#e0e0e2,#c8c8ca);border:1px solid #bdbdbf"></div>
<div class="a" style="left:924px;top:196px;width:1916px;height:1403px;background:#e3e3e5;border:1px solid #d6d6d8;border-radius:9px"></div>
<div class="a" style="left:930px;top:230px;width:1906px;height:1364px;background:#ececee"></div>
<div class="a" style="left:2836px;top:232px;width:1px;height:1362px;background:#dedee0"></div>
<div class="a" style="left:1695px;top:172px;width:374px;height:40px;border-radius:7px;background:linear-gradient(#6db3fa,#2c8cf8 45%,#1a7ef6)"></div>
<svg style="left:1710px;top:176px" width="30" height="30" viewBox="0 0 30 30"><use href="#cls"/></svg>
<div class="a ui" style="left:1750px;top:173px;font-size:28px;line-height:38px;color:#0a1440;transform:scaleX(0.967);transform-origin:0 0">ServiceManager.class</div>
<svg style="left:2027px;top:182px" width="20" height="20" viewBox="0 0 20 20"><use href="#cx"/></svg>
<div class="a" style="left:2808px;top:230px;width:28px;height:3px;background:#86b6ee"></div>
<div class="a" style="left:930px;top:230px;width:1878px;height:1364px;background:#fff;border:2px solid #7a7a7a;border-top-color:#555;border-bottom-color:#8a8a8a"></div>
<div class="a" style="left:1006px;top:232px;width:1px;height:1330px;background:#dcdcdc"></div>
<div class="a" style="left:932px;top:232px;width:1842px;height:1330px;overflow:hidden">
<div class="a mono code" style="left:75.5px;top:4.5px"><b>import</b> <u>com.tencent.cloud.tsw.agent.core.loader.AgentDefaultClassLoader</u>;
<b>import</b> <u>com.tencent.cloud.tsw.agent.core.logging.api.ILog</u>;
<b>import</b> <u>com.tencent.cloud.tsw.agent.core.logging.api.LoggerFactory</u>;
<b>import</b> java.util.Collections;
<b>import</b> java.util.HashMap;
<b>import</b> java.util.Map;
<b>import</b> java.util.ServiceLoader;
 
<b>public</b> <b>enum</b> ServiceManager {
  INSTANCE;
 
  <b>private</b> Map&lt;Class, <u>ServiceBootStrap</u>&gt; bootedServices;
 
  <b>private</b> <b>static</b> <b>final</b> <u>ILog</u> logger;
 
  ServiceManager() {
    <b>this</b>.<u>bootedServices</u> = Collections.emptyMap();
  }
 
  <b>static</b> {
    <u>logger</u> = <u>LoggerFactory</u>.<u>getLogger</u>(<u>ServiceManager</u>.<b>class</b>);
  }
 
  <b>public</b> <b>void</b> boot() {
    <b>this</b>.<u>bootedServices</u> = <u>loadService</u>();
    <u>prepare</u>();
    <u>startup</u>();
    <u>onComplete</u>();
  }
 
  <b>public</b> <b>void</b> prepare() {
    <b>for</b> (<u>ServiceBootStrap</u> service : <b>this</b>.<u>bootedServices</u>.values()) {
      <b>try</b> {
        service.<u>prepare</u>();
      } <b>catch</b> (Throwable e) {
        <u>logger</u>.<u>error</u>(e, <i>&quot;ServiceManager try to prepare fail.{}&quot;</i>, <b>new</b> Object[] { service.getClass().getName() });
      }
    }
  }
 
  <b>public</b> <b>void</b> startup() {
    <b>for</b> (<u>ServiceBootStrap</u> service : <b>this</b>.<u>bootedServices</u>.values()) {
      <b>try</b> {
        service.<u>startup</u>();
      } <b>catch</b> (Throwable e) {</div>
<div class="a mono code" style="left:-10px;top:274.5px;width:60px;text-align:right;color:#787878">15</div>
<div class="a mono code" style="left:-10px;top:484.5px;width:60px;text-align:right;color:#787878">17</div>
<div class="a mono code" style="left:-10px;top:724.5px;width:60px;text-align:right;color:#787878">21</div>
<div class="a mono code" style="left:-10px;top:754.5px;width:60px;text-align:right;color:#787878">23</div>
<div class="a mono code" style="left:-10px;top:784.5px;width:60px;text-align:right;color:#787878">24</div>
<div class="a mono code" style="left:-10px;top:814.5px;width:60px;text-align:right;color:#787878">25</div>
<div class="a mono code" style="left:-10px;top:934.5px;width:60px;text-align:right;color:#787878">29</div>
<div class="a mono code" style="left:-10px;top:994.5px;width:60px;text-align:right;color:#787878">31</div>
<div class="a mono code" style="left:-10px;top:1024.5px;width:60px;text-align:right;color:#787878">32</div>
<div class="a mono code" style="left:-10px;top:1054.5px;width:60px;text-align:right;color:#787878">33</div>
<div class="a mono code" style="left:-10px;top:1234.5px;width:60px;text-align:right;color:#787878">39</div>
<div class="a mono code" style="left:-10px;top:1294.5px;width:60px;text-align:right;color:#787878">41</div>
<div class="a mono code" style="left:-10px;top:1324.5px;width:60px;text-align:right;color:#787878">43</div>
<svg style="left:53px;top:6.699999999999989px" width="20" height="20" viewBox="0 0 20 20"><use href="#fold"/></svg>
<svg style="left:53px;top:246.7px" width="20" height="20" viewBox="0 0 20 20"><use href="#fold"/></svg>
<svg style="left:53px;top:456.70000000000005px" width="20" height="20" viewBox="0 0 20 20"><use href="#fold"/></svg>
<svg style="left:53px;top:576.7px" width="20" height="20" viewBox="0 0 20 20"><use href="#fold"/></svg>
<svg style="left:53px;top:696.7px" width="20" height="20" viewBox="0 0 20 20"><use href="#fold"/></svg>
<svg style="left:53px;top:906.7px" width="20" height="20" viewBox="0 0 20 20"><use href="#fold"/></svg>
<svg style="left:53px;top:936.7px" width="20" height="20" viewBox="0 0 20 20"><use href="#fold"/></svg>
<svg style="left:53px;top:966.7px" width="20" height="20" viewBox="0 0 20 20"><use href="#fold"/></svg>
<svg style="left:53px;top:1206.7px" width="20" height="20" viewBox="0 0 20 20"><use href="#fold"/></svg>
<svg style="left:53px;top:1236.7px" width="20" height="20" viewBox="0 0 20 20"><use href="#fold"/></svg>
<svg style="left:53px;top:1266.7px" width="20" height="20" viewBox="0 0 20 20"><use href="#fold"/></svg>
</div>
<div class="a" style="left:2774px;top:232px;width:30px;height:1330px;background:#f8f9fb;border-left:1px solid #e2e2e4;border-right:1px solid #eeeeef"></div>
<div class="a" style="left:2782px;top:267px;width:16px;height:688px;border-radius:8px;background:#c2c2c4"></div>
<div class="a" style="left:932px;top:1562px;width:76px;height:30px;background:#fcfcfd"></div>
<div class="a" style="left:1007px;top:1562px;width:1767px;height:30px;background:#f8f9fb;border-top:1px solid #e2e2e4"></div>
<div class="a" style="left:1010px;top:1570px;width:1552px;height:16px;border-radius:8px;background:#c2c2c4"></div>
<div class="a" style="left:2774px;top:1562px;width:32px;height:30px;background:#fff"></div>
</div></body></html>
